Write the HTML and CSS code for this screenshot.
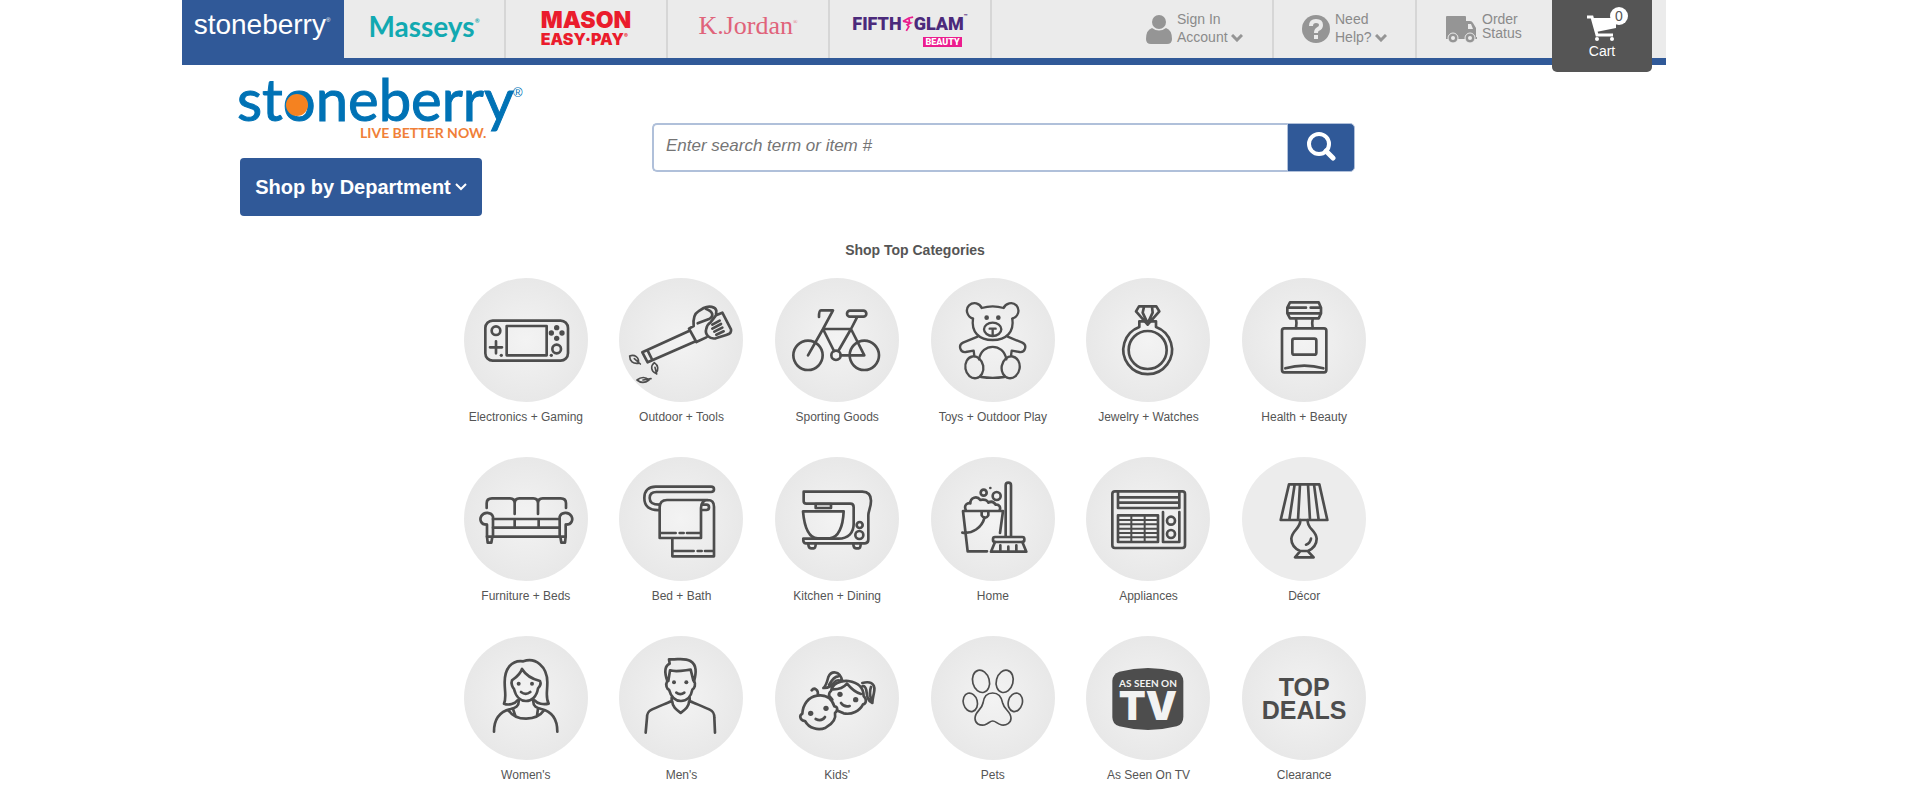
FILE: index.html
```html
<!DOCTYPE html>
<html lang="en">
<head>
  <meta charset="UTF-8">
  <meta name="viewport" content="width=device-width, initial-scale=1.0">
  <title>Stoneberry</title>
  <link rel="stylesheet" href="styles.css">
</head>
<body>
  <div class="page">
    <nav class="topbar">
      <a class="tab active" href="#"><span class="brand-stoneberry">stoneberry<sup>®</sup></span></a>
      <a class="tab" href="#"><span class="brand-masseys">Masseys<sup>®</sup></span></a>
      <a class="tab" href="#"><span class="brand-mason"><b>MASON</b><b class="easy">EASY·PAY<sup>®</sup></b></span></a>
      <a class="tab" href="#"><span class="brand-kjordan">K.Jordan<sup>®</sup></span></a>
      <a class="tab" href="#">
        <span class="brand-glam">
          <span class="glam-row">FIFTH
            <svg width="12" height="20" viewBox="0 0 14 20" aria-hidden="true"><path d="M1 7 L8 3 L13 2 M2 7 L10 9 L6 11 L8 13 L5 18 M8 3 L9 9" fill="none" stroke="#ec1c8e" stroke-width="2"/></svg>
            GLAM<sup>™</sup></span>
          <span class="glam-beauty">BEAUTY</span>
        </span>
      </a>
      <div class="tools">
        <a class="tool account" href="#">
          <svg width="26" height="29" viewBox="0 0 26 29" aria-hidden="true"><circle cx="13" cy="7" r="7"/><path d="M6 13 Q13 18 20 13 Q26 15 26 24 Q26 29 21 29 H5 Q0 29 0 24 Q0 15 6 13z"/></svg>
          <span>Sign In<br>Account <svg width="12" height="8" viewBox="0 0 12 8" aria-hidden="true"><path class="chev" d="M1 1 L6 6 L11 1"/></svg></span>
        </a>
        <a class="tool help" href="#">
          <svg width="28" height="28" viewBox="0 0 28 28" aria-hidden="true"><circle cx="14" cy="14" r="14"/><path d="M9 11 Q9 6 14 6 Q19 6 19 10 Q19 13 16 14 Q14 15 14 18" fill="none" stroke="#ebebeb" stroke-width="4"/><rect x="12" y="20" width="4" height="4" fill="#ebebeb"/></svg>
          <span>Need<br>Help? <svg width="12" height="8" viewBox="0 0 12 8" aria-hidden="true"><path class="chev" d="M1 1 L6 6 L11 1"/></svg></span>
        </a>
        <a class="tool order" href="#">
          <svg width="32" height="28" viewBox="0 0 32 28" aria-hidden="true"><path d="M2 1 H20 Q21 1 21 2 V6 H25 Q27 6 28 8 L31 13 V22 H32 V24 H1 V2 Q1 1 2 1z"/><path d="M23 9 H26 L28 14 H23z" fill="#ebebeb"/><g stroke="#ebebeb" stroke-width="1"><circle cx="8" cy="23" r="5"/><circle cx="25" cy="23" r="5"/></g><circle cx="8" cy="23" r="2" fill="#ebebeb"/><circle cx="25" cy="23" r="2" fill="#ebebeb"/></svg>
          <span>Order<br>Status</span>
        </a>
        <a class="cart" href="#">
          <svg width="34" height="28" viewBox="0 0 34 28" aria-hidden="true"><path d="M2 3 H7 L12 21 H28" fill="none" stroke="#fff" stroke-width="3"/><path d="M7 4 H31 V14 L11 18z" fill="#fff"/><circle cx="12" cy="25" r="2" fill="#fff"/><circle cx="27" cy="25" r="2" fill="#fff"/></svg>
          <span class="count">0</span>
          <span>Cart</span>
        </a>
      </div>
    </nav>

    <header class="header">
      <div class="brand">
        <a class="logo" href="#" aria-label="Stoneberry, live better now">
          <svg width="290" height="72" viewBox="0 0 290 72" aria-hidden="true">
            <text class="logo-name" x="1" y="46">stoneberry</text>
            <circle cx="61" cy="30" r="11" fill="#f58220"/>
            <text class="logo-reg" x="277" y="22">®</text>
            <text class="logo-tag" x="124" y="63">LIVE BETTER NOW.</text>
          </svg>
        </a>
        <button class="department" type="button">Shop by Department
          <svg width="12" height="8" viewBox="0 0 12 8" aria-hidden="true"><path d="M1 1 L6 6 L11 1" fill="none" stroke="#fff" stroke-width="2"/></svg>
        </button>
      </div>
      <form class="search">
        <input type="text" aria-label="Search" placeholder="Enter search term or item #">
        <button type="submit" aria-label="Search">
          <svg width="30" height="30" viewBox="0 0 30 30" aria-hidden="true"><circle cx="13" cy="13" r="10" fill="none" stroke="#fff" stroke-width="4"/><path d="M20 20 L27 27" stroke="#fff" stroke-width="5" stroke-linecap="round"/></svg>
        </button>
      </form>
    </header>

    <main class="categories">
      <h2>Shop Top Categories</h2>
      <div class="grid">
        <a class="category" href="#">
          <span class="circle"><svg viewBox="42 128 372 372" aria-hidden="true">
            <rect x="106" y="256" width="248" height="120" rx="22"/><rect x="170" y="272" width="120" height="88"/>
            <circle cx="138" cy="286" r="13"/><circle cx="320" cy="341" r="13"/><path d="M120 336 H156 M138 318 V354"/>
            <g class="solid"><circle cx="154" cy="360" r="5"/><circle cx="304" cy="360" r="5"/><circle cx="320" cy="277" r="8"/><circle cx="304" cy="293" r="8"/><circle cx="336" cy="293" r="8"/><circle cx="320" cy="309" r="8"/></g>
          </svg></span>
          Electronics + Gaming
        </a>
        <a class="category" href="#">
          <span class="circle"><svg viewBox="510 128 372 372" aria-hidden="true">
            <path d="M720 287 L580 351 L596 381 L740 318 M596 346 L610 374"/>
            <path d="M720 280 L742 320 L772 306 M720 280 L734 272 C732 250 734 236 748 228 L764 218 C780 210 800 214 802 226 L801 240 L820 232 L846 282 C848 292 842 296 834 298 L800 309 C782 312 766 298 772 280 Q774 268 784 262 L801 240"/>
            <path d="M746 264 L782 250 C794 244 794 228 770 220 M790 268 L812 256 M790 280 L816 266 M796 289 L820 277 M802 298 L824 288"/>
            <g stroke-width="5"><path d="M542 362 C556 356 572 366 568 384 C552 386 542 378 542 362z M556 370 L574 386"/><path d="M616 382 C604 392 606 408 620 414 C630 404 628 390 616 382z M618 396 L623 416"/><path d="M564 434 C576 424 590 424 600 434 C590 442 576 444 564 434z M582 434 L606 430"/></g>
          </svg></span>
          Outdoor + Tools
        </a>
        <a class="category" href="#">
          <span class="circle"><svg viewBox="46 128 372 372" aria-hidden="true">
            <circle cx="145" cy="360" r="44"/><circle cx="314" cy="360" r="44"/><circle cx="229" cy="360" r="14"/>
            <rect x="262" y="226" width="58" height="18" rx="9"/>
            <path d="M145 360 L190 281 L220 225 H184 Q178 225 178 245 M292 246 L274 281 L236 347 M190 281 H274 M190 281 L223 347 M243 360 H314 L274 281"/>
          </svg></span>
          Sporting Goods
        </a>
        <a class="category" href="#">
          <span class="circle"><svg viewBox="512 128 372 372" aria-hidden="true">
            <g stroke-width="7">
            <path d="M638 250 C620 244 614 222 626 210 C640 198 658 204 664 218 Q697 208 730 218 C736 204 756 198 768 210 C780 224 774 244 756 250"/>
            <path d="M638 250 C632 290 656 314 697 314 C738 314 762 290 756 250"/>
            <ellipse cx="697" cy="282" rx="26" ry="20"/><path d="M688 280 H706 M697 282 V300"/>
            <path d="M652 304 L608 322 C592 330 600 352 616 350 L640 346 L642 362 M742 304 L786 322 C802 330 794 352 778 350 L754 346 L752 362"/>
            <path d="M656 372 C664 322 730 322 738 372 M662 425 Q697 430 732 425"/>
            <ellipse cx="642" cy="396" rx="27" ry="33" transform="rotate(-10 642 396)"/><ellipse cx="751" cy="396" rx="27" ry="33" transform="rotate(10 751 396)"/>
            </g>
            <g class="solid"><circle cx="679" cy="247" r="7"/><circle cx="714" cy="247" r="7"/></g>
          </svg></span>
          Toys + Outdoor Play
        </a>
        <a class="category" href="#">
          <span class="circle"><svg viewBox="50 128 372 372" aria-hidden="true">
            <circle cx="235" cy="344" r="57"/>
            <path d="M226 258 H210 V275 A73 73 0 1 0 260 275 V258 H244"/>
            <path d="M209 213 H261 L270 228 L235 268 L200 228z M224 214 L220 232 L235 264 L250 232 L248 214"/>
          </svg></span>
          Jewelry + Watches
        </a>
        <a class="category" href="#">
          <span class="circle"><svg viewBox="516 128 372 372" aria-hidden="true">
            <path d="M660 201 H746 L753 217 V234 L746 249 H660 L652 234 V217z M658 217 H708 M722 217 H748 M652 234 H752"/>
            <path d="M678 250 Q681 264 678 278 M728 250 Q725 264 728 278"/>
            <rect x="636" y="279" width="133" height="132" rx="7"/><rect x="667" y="310" width="72" height="48" rx="6"/>
            <path d="M646 399 Q703 383 760 399"/>
          </svg></span>
          Health + Beauty
        </a>

        <a class="category" href="#">
          <span class="circle"><svg viewBox="42 53 372 372" aria-hidden="true">
            <path d="M110 206 V192 Q110 177 126 177 H180 Q194 177 194 192 V224 M194 192 Q194 177 208 177 H250 Q264 177 264 192 V224 M264 192 Q264 177 278 177 H332 Q348 177 348 192 V206"/>
            <path d="M110 256 C92 256 88 240 94 230 C102 216 124 218 129 232 V292 M111 256 V292 M348 256 C366 256 370 240 364 230 C356 216 334 218 329 232 V292 M347 256 V292"/>
            <path d="M129 239 H329 M129 265 H329 M194 239 V265 M266 239 V265 M111 292 H347 M111 292 L113 310 H124 L127 292 M347 292 L345 310 H334 L331 292"/>
          </svg></span>
          Furniture + Beds
        </a>
        <a class="category" href="#">
          <span class="circle"><svg viewBox="510 53 372 372" aria-hidden="true">
            <path d="M632 212 C600 214 586 200 586 176 C586 154 600 142 620 142 H786 Q795 142 795 150 Q795 158 786 158 H622 C608 158 602 166 602 176 C602 190 610 196 632 196"/>
            <path d="M756 296 H632 V204 Q632 182 654 182 H776 Q795 182 795 202 V351 H670 V298 M756 296 V206 Q756 184 776 182 M758 196 H772 Q780 196 780 204 Q780 212 772 212 H758"/>
            <path d="M634 281 H680 M692 281 H704 M714 281 H754 M672 335 H734 M746 335 H758 M768 335 H794"/>
          </svg></span>
          Bed + Bath
        </a>
        <a class="category" href="#">
          <span class="circle"><svg viewBox="46 53 372 372" aria-hidden="true">
            <path d="M132 157 H308 Q334 158 334 184 C334 204 326 214 326 228 V300 Q326 312 316 312 H138 Q130 312 131 298 H236 C266 298 282 280 282 254 V204 Q282 193 272 193 H140 Q132 193 132 186z"/>
            <rect x="168" y="194" width="46" height="12"/><path d="M130 216 H252 C250 262 236 296 210 297 H174 C148 296 134 262 130 216z"/>
            <circle cx="300" cy="257" r="9"/><circle cx="299" cy="287" r="12"/>
            <path d="M146 314 Q146 327 154 327 H162 Q168 327 168 314 M281 314 Q281 327 289 327 H297 Q303 327 303 314"/>
          </svg></span>
          Kitchen + Dining
        </a>
        <a class="category" href="#">
          <span class="circle"><svg viewBox="512 53 372 372" aria-hidden="true">
            <path d="M680 336 H622 L608 215 H728 L719 281 M664 216 V228 Q674 244 684 228 V216 M673 234 C664 266 636 284 606 280"/>
            <path d="M616 211 C610 196 622 190 630 192 C630 174 650 168 660 182 C672 178 682 184 684 190 C694 184 702 190 706 196 C716 194 722 204 718 212"/>
            <circle cx="670" cy="160" r="9"/><circle cx="709" cy="170" r="12"/><circle class="solid" cx="690" cy="146" r="4"/>
            <path d="M736 292 V138 Q736 130 744 130 Q752 130 752 138 V292 M704 308 L692 337 H798 L786 308 M720 336 V318 M744 336 V322 M768 336 V318"/><rect x="698" y="293" width="94" height="15" rx="6"/>
          </svg></span>
          Home
        </a>
        <a class="category" href="#">
          <span class="circle"><svg viewBox="50 53 372 372" aria-hidden="true">
            <rect x="129" y="156" width="218" height="170" rx="8"/>
            <path d="M146 158 V206 H330 V158 M146 174 H330 M146 190 H330 M281 218 V308 H330 V218"/>
            <rect x="146" y="228" width="120" height="80"/><path stroke-width="6" d="M186 228 V308 M226 228 V308 M146 242 H266 M146 255 H266 M146 268 H266 M146 281 H266 M146 294 H266"/>
            <circle cx="305" cy="244" r="12"/><circle cx="305" cy="284" r="12"/>
          </svg></span>
          Appliances
        </a>
        <a class="category" href="#">
          <span class="circle flat"><svg viewBox="516 53 372 372" aria-hidden="true">
            <path d="M657 135 H748 L772 242 H632z M674 135 L658 242 M690 135 L684 242 M714 135 L720 242 M732 135 L746 242"/>
            <path d="M691 242 C692 268 666 272 664 298 C664 314 672 326 690 335 H714 C732 326 740 314 740 298 C738 272 710 268 713 242 M690 336 L675 354 H731 L714 336 M723 298 Q720 312 708 316"/>
          </svg></span>
          Décor
        </a>

        <a class="category" href="#">
          <span class="circle"><svg viewBox="42 51 372 372" aria-hidden="true">
            <path d="M202 244 C196 254 176 260 162 254 C170 236 164 220 164 190 C164 150 184 122 220 127 C256 114 292 142 292 190 C292 222 286 236 296 254 C280 258 262 254 254 244"/>
            <path d="M216 150 C210 168 196 176 186 184 C182 194 188 206 192 210 C198 236 214 246 228 246 C244 246 260 234 264 208 C270 202 274 194 270 186 C246 180 228 170 216 150z M213 219 Q227 230 241 219"/>
            <path d="M206 244 C208 262 196 266 182 270 C148 278 132 300 132 338 M250 244 C248 262 260 266 274 270 C308 278 322 300 322 338 M176 274 C196 307 260 307 282 274 M189 270 L196 290 M264 268 L261 290"/>
            <g class="solid"><circle cx="206" cy="194" r="6"/><circle cx="246" cy="194" r="6"/></g>
          </svg></span>
          Women's
        </a>
        <a class="category" href="#">
          <span class="circle"><svg viewBox="510 51 372 372" aria-hidden="true">
            <path d="M655 186 C646 160 648 140 662 134 L660 121 C690 122 708 116 724 126 C744 138 742 160 735 188 M658 186 L663 154 C682 160 706 154 725 152 L733 184"/>
            <path d="M655 186 C648 198 654 210 660 212 C666 234 680 246 696 246 C712 246 726 234 730 212 C736 208 742 196 735 186 M682 221 Q694 230 706 221"/>
            <path d="M668 236 V246 C650 254 620 266 608 272 C596 278 594 284 594 296 L590 341 M722 236 V246 C740 254 770 266 782 272 C794 278 796 284 796 296 L798 341 M670 248 C670 262 680 270 695 282 C710 270 720 262 720 248"/>
            <g class="solid"><circle cx="675" cy="190" r="6"/><circle cx="712" cy="190" r="6"/></g>
          </svg></span>
          Men's
        </a>
        <a class="category" href="#">
          <span class="circle"><svg viewBox="46 51 372 372" aria-hidden="true">
            <path d="M128 284 C118 288 120 304 136 306 C148 328 176 336 198 326 C216 316 230 300 226 282 C236 274 234 262 224 262 C216 236 196 226 172 230 C146 234 130 256 128 284z M156 214 C164 204 178 212 174 230 M168 300 Q186 309 196 294"/>
            <path d="M218 242 L208 230 Q208 220 214 216 C218 194 242 184 266 186 C292 190 312 204 312 232 C322 240 320 254 310 256 C300 276 276 288 252 283 L234 275 M216 211 C236 212 252 206 262 194 C272 206 284 220 304 225 M244 252 Q254 266 270 261"/>
            <path d="M248 186 C240 152 214 156 206 174 C202 190 198 202 191 207 C206 208 216 202 224 190 Q230 180 246 186 M208 198 Q222 172 236 172 M308 192 C330 186 346 192 344 214 C342 230 338 240 338 252 C324 246 322 232 320 214 C318 204 314 200 308 202 M334 204 Q328 220 334 240"/>
            <g class="solid"><circle cx="153" cy="283" r="8"/><circle cx="199" cy="268" r="8"/><circle cx="241" cy="226" r="8"/><circle cx="288" cy="242" r="8"/></g>
          </svg></span>
          Kids'
        </a>
        <a class="category" href="#">
          <span class="circle"><svg viewBox="512 51 372 372" aria-hidden="true"><g stroke-width="5">
            <ellipse cx="662" cy="187" rx="25" ry="34" transform="rotate(-15 662 187)"/><ellipse cx="733" cy="187" rx="25" ry="34" transform="rotate(15 733 187)"/>
            <ellipse cx="630" cy="250" rx="21" ry="28" transform="rotate(-15 630 250)"/><ellipse cx="765" cy="250" rx="21" ry="28" transform="rotate(15 765 250)"/>
            <path d="M697 222 C676 222 670 236 668 252 C664 274 644 276 644 298 C644 314 658 320 672 318 C686 314 688 306 697 306 C706 306 710 314 724 318 C738 320 752 312 752 298 C752 276 732 274 727 252 C724 236 718 222 697 222z"/>
          </g></svg></span>
          Pets
        </a>
        <a class="category" href="#">
          <span class="circle"><svg viewBox="50 51 372 372" aria-hidden="true">
            <path class="solid" d="M150 158 Q236 136 322 158 Q342 166 342 186 V294 Q342 316 322 322 Q236 344 150 322 Q129 316 129 294 V186 Q129 166 150 158z"/>
            <text class="tv-small" x="236" y="204">AS SEEN ON</text>
            <text class="tv-big" x="236" y="302">TV</text>
          </svg></span>
          As Seen On TV
        </a>
        <a class="category" href="#">
          <span class="circle deals">TOP<br>DEALS</span>
          Clearance
        </a>
      </div>
    </main>
  </div>
</body>
</html>
```
FILE: styles.css
```css
* {
  box-sizing: border-box;
}

body {
  margin: 0;
  background-color: #fff;
  color: #555;
  font-family: "Liberation Sans", Arial, sans-serif;
}

a {
  color: inherit;
  text-decoration: none;
}

.page {
  margin: 0 254px 0 182px;
}

/* top bar */
.topbar {
  display: flex;
  height: 65px;
  background-color: #ebebeb;
  border-bottom: 7px solid #305998;
}

.tab {
  display: flex;
  flex: 0 0 162px;
  align-items: flex-start;
  justify-content: center;
  border-right: 2px solid #d6d6d6;
  line-height: 1;
  white-space: nowrap;
}

.tab.active {
  background-color: #305998;
  border-color: #305998;
  color: #fff;
}

.tab sup {
  font-size: 6px;
  line-height: 18px;
  vertical-align: top;
}

.brand-stoneberry {
  margin-top: 11px;
  font-size: 28px;
}

.brand-masseys {
  margin-top: 12px;
  color: #12a9b1;
  font: 700 28px/1 Lato, sans-serif;
}

.brand-mason {
  display: flex;
  flex-direction: column;
  margin-top: 9px;
  color: #ea1c2c;
  font: 900 23px/22px Inter, sans-serif;
}

.brand-mason b {
  font-weight: 900;
}

.brand-mason .easy {
  font-size: 16px;
  line-height: 16px;
}

.brand-mason sup {
  line-height: 10px;
}

.brand-kjordan {
  margin-top: 13px;
  color: #e0637a;
  font: 26px/1 "Liberation Serif", serif;
}

.brand-glam {
  display: flex;
  flex-direction: column;
  align-items: flex-end;
  margin-top: 11px;
  color: #4b2a7b;
  font: 900 18px/26px Roboto, sans-serif;
}

.glam-row {
  display: flex;
}

.glam-row svg {
  margin-top: 3px;
}

.glam-row sup {
  line-height: 10px;
}

.glam-beauty {
  margin-right: 6px;
  padding: 0 2px;
  background-color: #ec1c8e;
  color: #fff;
  font-size: 9px;
  line-height: 10px;
}

.tools {
  display: flex;
  align-items: flex-start;
  margin-left: auto;
  padding-right: 14px;
}

.tool {
  display: flex;
  gap: 5px;
  height: 58px;
  padding-top: 10px;
  color: #8a8a8a;
  font-size: 14px;
  line-height: 18px;
  white-space: nowrap;
}

.tool > svg {
  flex: none;
  margin-top: 5px;
  fill: #959595;
}

.chev {
  fill: none;
  stroke: #959595;
  stroke-width: 3;
}

.account {
  width: 128px;
  border-right: 2px solid #d6d6d6;
}

.help {
  width: 143px;
  padding-left: 28px;
  border-right: 2px solid #d6d6d6;
}

.order {
  width: 135px;
  padding-left: 28px;
}

.order span {
  padding-top: 2px;
  line-height: 14px;
}

.cart {
  position: relative;
  display: flex;
  flex-direction: column;
  align-items: center;
  width: 100px;
  height: 72px;
  padding-top: 14px;
  background-color: #555;
  border-radius: 0 0 5px 5px;
  color: #fff;
  font-size: 14px;
  line-height: 18px;
}

.count {
  position: absolute;
  top: 7px;
  left: 58px;
  width: 18px;
  height: 18px;
  border-radius: 50%;
  background-color: #fff;
  color: #555;
  text-align: center;
}

/* logo, departments, search */
.header {
  display: flex;
  align-items: flex-start;
  padding: 10px 311px 0 54px;
}

.brand {
  flex: 0 0 416px;
}

.logo svg {
  display: block;
  overflow: visible;
}

.logo-name {
  fill: #0072b5;
  font: 58px Lato, sans-serif;
  stroke: #0072b5;
  stroke-width: 1;
}

.logo-reg {
  fill: #0072b5;
  font-size: 13px;
}

.logo-tag {
  fill: #f08038;
  font: 700 14px Lato, sans-serif;
}

.department {
  display: flex;
  align-items: center;
  justify-content: center;
  gap: 4px;
  width: 242px;
  height: 58px;
  margin: 11px 0 0 4px;
  padding: 0;
  background-color: #305998;
  border: none;
  border-radius: 4px;
  color: #fff;
  font: bold 20px "Liberation Sans", Arial, sans-serif;
  white-space: nowrap;
  cursor: pointer;
}

.search {
  display: flex;
  flex: 1;
  height: 49px;
  margin-top: 48px;
}

.search input {
  flex: 1;
  min-width: 0;
  padding: 0 12px 4px;
  border: 2px solid #b0c0da;
  border-right: none;
  border-radius: 5px 0 0 5px;
  font: italic 17px "Liberation Sans", Arial, sans-serif;
}

.search input::placeholder {
  color: #757575;
}

.search button {
  width: 68px;
  padding: 0;
  background-color: #305998;
  border: 1px solid #b0c0da;
  border-radius: 0 5px 5px 0;
  cursor: pointer;
}

/* categories */
.categories {
  padding: 25px 18px 0 0;
}

.categories h2 {
  margin: 0 0 19px;
  font-size: 14px;
  line-height: 18px;
  text-align: center;
}

.grid {
  display: grid;
  grid-template-columns: repeat(6, 1fr);
  row-gap: 31px;
  max-width: 934px;
  margin: 0 auto;
}

.category {
  display: flex;
  flex-direction: column;
  align-items: center;
  gap: 6px;
  font-size: 12px;
  line-height: 18px;
}

.circle {
  width: 124px;
  height: 124px;
  border-radius: 50%;
  background: radial-gradient(circle, #f3f3f3 0, #e8e8e8 70%);
}

.circle.flat {
  background: #ececec;
}

.circle svg {
  display: block;
  fill: none;
  stroke: #4d4d4d;
  stroke-width: 8;
  stroke-linecap: round;
  stroke-linejoin: round;
}

.circle .solid {
  fill: #4d4d4d;
  stroke: none;
}

.tv-small,
.tv-big {
  fill: #f2f2f2;
  stroke: none;
  text-anchor: middle;
}

.tv-small {
  font: 700 30px Lato, sans-serif;
}

.tv-big {
  font: 900 118px Inter, sans-serif;
}

.deals {
  padding-top: 40px;
  color: #4d4d4d;
  font-size: 25px;
  font-weight: bold;
  line-height: 23px;
  text-align: center;
}
```
